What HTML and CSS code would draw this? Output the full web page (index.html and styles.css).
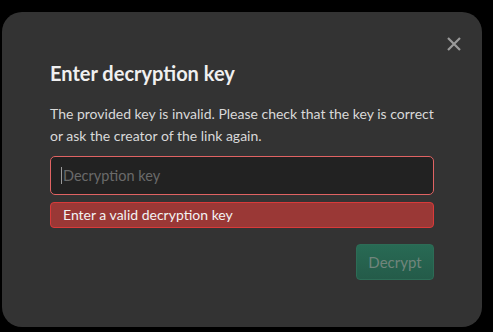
FILE: index.html
```html
<!DOCTYPE html>
<html>
<head>
<meta charset="utf-8">
<link rel="stylesheet" href="styles.css">
</head>
<body>
<div class="dialog">
  <button class="close" aria-label="Close">
    <svg width="14" height="14" viewBox="0 0 14 14"><path d="M1 1L13 13M13 1L1 13" stroke="#9a9a9a" stroke-width="2.2" stroke-linecap="butt"/></svg>
  </button>
  <h2 class="title">Enter decryption key</h2>
  <p class="desc">The provided key is invalid. Please check that the key is correct or ask the creator of the link again.</p>
  <div class="field">
    <span class="caret"></span><span class="placeholder">Decryption key</span>
  </div>
  <div class="error">Enter a valid decryption key</div>
  <div class="actions">
    <button class="decrypt" disabled>Decrypt</button>
  </div>
</div>
</body>
</html>
```
FILE: styles.css
```css
html, body {
  margin: 0;
  padding: 0;
  background: #000;
  font-family: Lato, "Open Sans", sans-serif;
}
body {
  padding: 12px 11px 0 2px;
  height: 332px;
  box-sizing: border-box;
  overflow: hidden;
}
.dialog {
  position: relative;
  width: 480px;
  height: 315px;
  box-sizing: border-box;
  background: #333333;
  border-radius: 20px;
  padding: 49px 48px 0 48px;
}
.close {
  position: absolute;
  top: 25px;
  right: 21px;
  width: 14px;
  height: 14px;
  padding: 0;
  border: 0;
  background: none;
  display: flex;
}
.title {
  margin: 0;
  font-size: 20px;
  line-height: 24px;
  font-weight: 700;
  color: #f0f0f0;
}
.desc {
  margin: 18px 0 0 0;
  font-size: 14px;
  line-height: 22px;
  color: #d9d9d9;
}
.field {
  margin-top: 9px;
  height: 39px;
  box-sizing: border-box;
  border: 1px solid #e06363;
  border-radius: 5px;
  background: #222222;
  display: flex;
  align-items: center;
  padding-left: 10px;
}
.caret {
  width: 1px;
  height: 17px;
  background: #9a9a9a;
  margin-right: 1px;
}
.placeholder {
  font-size: 14.5px;
  color: #6a6a6a;
}
.error {
  margin-top: 7px;
  height: 26px;
  box-sizing: border-box;
  border: 1px solid #d93a3a;
  border-radius: 4px;
  background: #9a3836;
  color: #f2f2f2;
  font-size: 14px;
  line-height: 24px;
  padding-left: 12px;
}
.actions {
  display: flex;
  justify-content: flex-end;
  margin-top: 16px;
}
.decrypt {
  width: 78px;
  height: 36px;
  border: 1px solid #2d6c56;
  border-radius: 4px;
  background: linear-gradient(#286a54, #245b49);
  color: #71857c;
  font-family: Lato, sans-serif;
  font-size: 15px;
  padding: 0;
}
```
